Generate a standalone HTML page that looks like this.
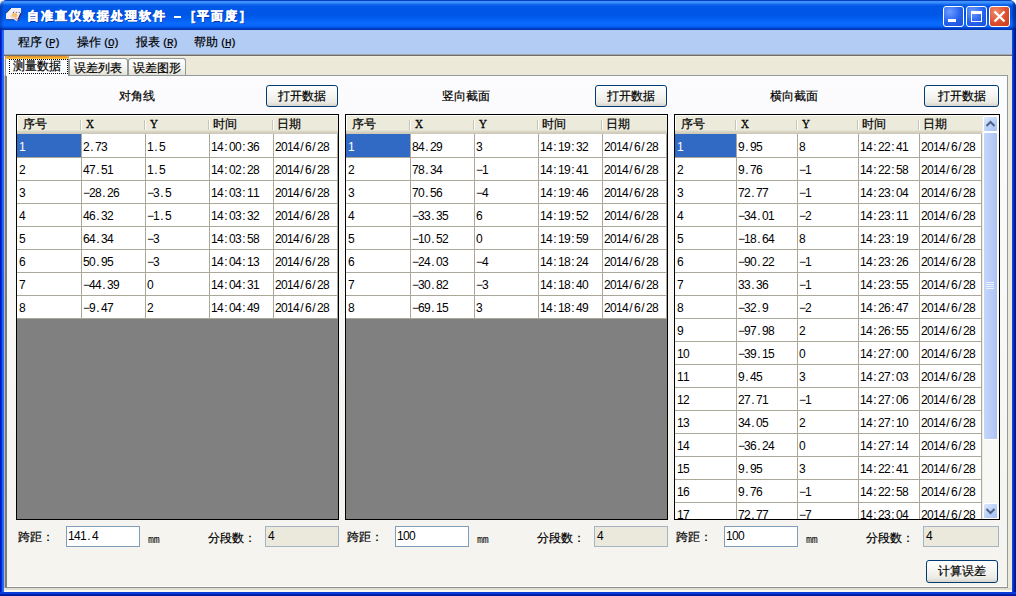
<!DOCTYPE html><html><head><meta charset="utf-8"><style>
*{margin:0;padding:0;box-sizing:border-box}
html,body{width:1016px;height:596px;overflow:hidden;background:#fff}
body{position:relative;font-family:'Liberation Sans', sans-serif;font-size:12px;color:#000}
.a{position:absolute}
.t{position:absolute;white-space:nowrap;line-height:12px;-webkit-text-stroke:0.2px currentColor}
.m{font-family:'Liberation Sans', sans-serif;font-size:12px;-webkit-text-stroke:0}
.m i{font-style:normal;display:inline-block;width:6px;text-align:center}
</style></head><body><div class="a" style="left:0px;top:0px;width:1016px;height:596px;background:#0050E4;border-radius:7px 7px 0 0"></div>
<div class="a" style="left:0px;top:0px;width:1016px;height:30px;border-radius:7px 7px 0 0;background:linear-gradient(#0840C0 0px,#0840C0 1px,#3D95FF 1px,#3A8EFA 3px,#1A6EF0 4px,#0058E8 6px,#0055E5 14px,#005CEE 18px,#0A6AFF 23px,#0866FA 26px,#0050E0 27.5px,#0038B8 29px,#0030A8 30px)"></div>
<div class="a" style="left:1008px;top:0px;width:8px;height:30px;border-radius:0 7px 0 0;background:linear-gradient(90deg,rgba(0,10,90,0) 0,rgba(0,10,90,0) 4px,rgba(0,10,90,0.35) 5px,rgba(0,10,90,0.55) 8px)"></div>
<div class="a" style="left:0px;top:0px;width:4px;height:30px;border-radius:7px 0 0 0;background:linear-gradient(90deg,rgba(0,10,90,0.35),rgba(0,10,90,0) 4px)"></div>
<div class="a" style="left:0px;top:30px;width:4px;height:566px;background:linear-gradient(90deg,#0014C0 0,#0014C0 1px,#0030DA 1px,#0030DA 2px,#1862FA 2px,#1862FA 3px,#2A6EEE 3px)"></div>
<div class="a" style="left:1012px;top:30px;width:4px;height:566px;background:linear-gradient(90deg,#1048E0 0,#1048E0 1px,#0030C8 1px,#0030C8 2px,#00209C 2px,#00209C 3px,#001888 3px)"></div>
<div class="a" style="left:0px;top:592px;width:1016px;height:4px;background:linear-gradient(#0A3CD8 0,#0A3CD8 2px,#0020B0 2px,#0020B0 3px,#0018A0 3px)"></div>
<div class="a" style="left:4px;top:30px;width:1008px;height:562px;background:#ECE9D8"></div>
<div class="a" style="left:4px;top:30px;width:1008px;height:24px;background:#B3CCF4"></div>
<div class="a" style="left:4px;top:54px;width:1008px;height:1px;background:#A0A6B0"></div>
<div class="a" style="left:4px;top:55px;width:1008px;height:1px;background:#716D64"></div>
<div class="a" style="left:4px;top:56px;width:1008px;height:1px;background:#F2EFE0"></div>
<div class="t" style="left:18px;top:36px;">程序<span style="font-family:'Liberation Mono', monospace;font-size:11px;letter-spacing:-1.6px;margin-left:2px">(<u>P</u>)</span></div>
<div class="t" style="left:77px;top:36px;">操作<span style="font-family:'Liberation Mono', monospace;font-size:11px;letter-spacing:-1.6px;margin-left:2px">(<u>O</u>)</span></div>
<div class="t" style="left:136px;top:36px;">报表<span style="font-family:'Liberation Mono', monospace;font-size:11px;letter-spacing:-1.6px;margin-left:2px">(<u>R</u>)</span></div>
<div class="t" style="left:194px;top:36px;">帮助<span style="font-family:'Liberation Mono', monospace;font-size:11px;letter-spacing:-1.6px;margin-left:2px">(<u>H</u>)</span></div>
<div class="t" style="left:27px;top:10px;color:#fff;font-weight:bold;font-size:12px;-webkit-text-stroke:0.5px #fff;text-shadow:1px 1px 0 #0A2A9A;letter-spacing:2px">自准直仪数据处理软件</div>
<div class="a" style="left:174px;top:16px;width:7px;height:2px;background:#fff"></div>
<div class="t" style="left:191px;top:10px;color:#fff;font-weight:bold;font-size:12px;-webkit-text-stroke:0.5px #fff;text-shadow:1px 1px 0 #0A2A9A;">[</div>
<div class="t" style="left:197px;top:10px;color:#fff;font-weight:bold;font-size:12px;-webkit-text-stroke:0.5px #fff;text-shadow:1px 1px 0 #0A2A9A;letter-spacing:2px">平面度</div>
<div class="t" style="left:240px;top:10px;color:#fff;font-weight:bold;font-size:12px;-webkit-text-stroke:0.5px #fff;text-shadow:1px 1px 0 #0A2A9A;">]</div>
<svg class="a" style="left:0px;top:0px" width="30" height="30" viewBox="0 0 30 30"><polygon points="11,8 21,8 21,13 17.5,21.5 14,19.5 6,19.5 6,13.3" fill="#F2EEF4"/><path d="M6,13.3 L11,8" stroke="#1C2C70" stroke-width="1"/><path d="M21,13 L17.5,21" stroke="#402848" stroke-width="1.2"/><path d="M6,19.6 L14,19.6" stroke="#203070" stroke-width="0.8"/><ellipse cx="14.5" cy="15.3" rx="2.8" ry="2" fill="#F7B23C"/><ellipse cx="14" cy="16.5" rx="4" ry="2" fill="#F8D0B0" opacity="0.5"/><circle cx="13.5" cy="12.4" r="0.55" fill="#505070"/><circle cx="16.3" cy="12.4" r="0.55" fill="#505070"/><circle cx="19.2" cy="12.4" r="0.55" fill="#505070"/><path d="M15,18 L18,20" stroke="#E0A0A8" stroke-width="1.5"/></svg>
<div class="a" style="left:943px;top:6px;width:21px;height:21px;border:1px solid #FFFFFF;border-radius:3px;background:radial-gradient(circle at 30% 25%,#6E9BFF,#2662EE 55%,#1A50D8)"></div>
<div class="a" style="left:966px;top:6px;width:21px;height:21px;border:1px solid #FFFFFF;border-radius:3px;background:radial-gradient(circle at 30% 25%,#6E9BFF,#2662EE 55%,#1A50D8)"></div>
<div class="a" style="left:989px;top:6px;width:21px;height:21px;border:1px solid #FFFFFF;border-radius:3px;background:radial-gradient(circle at 30% 25%,#F08A6A,#DC5030 55%,#C83C18)"></div>
<div class="a" style="left:948px;top:19px;width:8px;height:3px;background:#fff"></div>
<div class="a" style="left:971px;top:11px;width:11px;height:11px;border:1px solid #fff;border-top:3px solid #fff"></div>
<svg class="a" style="left:989px;top:6px" width="21" height="21"><path d="M5.5,5.5 L15.5,15.5 M15.5,5.5 L5.5,15.5" stroke="#fff" stroke-width="2.4"/></svg>
<div class="a" style="left:5px;top:75px;width:1003px;height:513px;border:1px solid #919B9C;border-bottom-color:#8E8E8A;border-left:2px solid #7E7C74;background:linear-gradient(#FCFCFE,#F4F3EE)"></div>
<div class="a" style="left:4px;top:75px;width:1px;height:513px;background:#B0B8D0"></div>
<div class="a" style="left:7px;top:586px;width:1000px;height:1px;background:#FFFFFF"></div>
<div class="a" style="left:5px;top:588px;width:1007px;height:2px;background:#E0DED2"></div>
<div class="a" style="left:5px;top:590px;width:1007px;height:2px;background:#FAFAF2"></div>
<div class="a" style="left:69px;top:58px;width:59px;height:17px;border:1px solid #919B9C;border-bottom:none;border-radius:3px 3px 0 0;background:linear-gradient(#FFFFFF,#F3F2EC 60%,#E4E2D8)"></div>
<div class="t" style="left:74px;top:62px;">误差列表</div>
<div class="a" style="left:128px;top:58px;width:58px;height:17px;border:1px solid #919B9C;border-bottom:none;border-radius:3px 3px 0 0;background:linear-gradient(#FFFFFF,#F3F2EC 60%,#E4E2D8)"></div>
<div class="t" style="left:133px;top:62px;">误差图形</div>
<div class="a" style="left:5px;top:56px;width:64px;height:20px;border:1px solid #919B9C;border-top:none;border-bottom:none;background:#FCFCFE"></div>
<div class="a" style="left:5px;top:56px;width:64px;height:3px;background:linear-gradient(#E08A2A,#FFC83C);border-radius:3px 3px 0 0"></div>
<div class="a" style="left:9px;top:59px;width:59px;height:15px;border:1px dotted #000"></div>
<div class="t" style="left:13px;top:60px;">测量数据</div>
<div class="t" style="left:119px;top:90px;">对角线</div>
<div class="a" style="left:266px;top:85px;width:72px;height:22px;border:1px solid #003C74;border-radius:3px;background:linear-gradient(#FFFFFF,#F4F4F0 50%,#ECEBE6 80%,#D8D4CC)"></div>
<div class="t" style="left:266px;top:90px;width:72px;text-align:center">打开数据</div>
<div class="a" style="left:16px;top:114px;width:323px;height:406px;border:1px solid #000;background:#808080"></div>
<div class="a" style="left:17px;top:115px;width:321px;height:19px;background:linear-gradient(#FFFFFF 0,#FFFFFF 1px,#EBEADB 1px,#EBEADB 15px,#DEDBCB 16px,#D6D2C2 17px,#CBC7B8 19px)"></div>
<div class="a" style="left:17px;top:115px;width:1px;height:15px;background:#FFFFFF"></div>
<div class="t" style="left:23px;top:118px;">序号</div>
<div class="a" style="left:80px;top:120px;width:1px;height:10px;background:#C7C5B2"></div>
<div class="a" style="left:81px;top:120px;width:1px;height:10px;background:#FFFFFF"></div>
<div class="t" style="left:86px;top:117px;font-family:'Liberation Serif', serif;font-size:11px;font-weight:normal;-webkit-text-stroke:0.3px #000;line-height:12px;transform:scaleY(1.1);transform-origin:0 0">X</div>
<div class="a" style="left:144px;top:120px;width:1px;height:10px;background:#C7C5B2"></div>
<div class="a" style="left:145px;top:120px;width:1px;height:10px;background:#FFFFFF"></div>
<div class="t" style="left:150px;top:117px;font-family:'Liberation Serif', serif;font-size:11px;font-weight:normal;-webkit-text-stroke:0.3px #000;line-height:12px;transform:scaleY(1.1);transform-origin:0 0">Y</div>
<div class="a" style="left:208px;top:120px;width:1px;height:10px;background:#C7C5B2"></div>
<div class="a" style="left:209px;top:120px;width:1px;height:10px;background:#FFFFFF"></div>
<div class="t" style="left:213px;top:118px;">时间</div>
<div class="a" style="left:272px;top:120px;width:1px;height:10px;background:#C7C5B2"></div>
<div class="a" style="left:273px;top:120px;width:1px;height:10px;background:#FFFFFF"></div>
<div class="t" style="left:277px;top:118px;">日期</div>
<div class="a" style="left:17px;top:134px;width:321px;height:385px;overflow:hidden">
<div class="a" style="left:0px;top:0px;width:65px;height:24px;background:#316AC5;border-right:1px solid #ACA899;border-bottom:1px solid #ACA899"></div>
<div class="t m" style="left:2px;top:7px;color:#FFFFFF"><i>1</i></div>
<div class="a" style="left:65px;top:0px;width:64px;height:24px;background:#FFFFFF;border-right:1px solid #ACA899;border-bottom:1px solid #ACA899"></div>
<div class="t m" style="left:66px;top:7px;color:#000"><i>2</i><i>.</i><i>7</i><i>3</i></div>
<div class="a" style="left:129px;top:0px;width:64px;height:24px;background:#FFFFFF;border-right:1px solid #ACA899;border-bottom:1px solid #ACA899"></div>
<div class="t m" style="left:130px;top:7px;color:#000"><i>1</i><i>.</i><i>5</i></div>
<div class="a" style="left:193px;top:0px;width:64px;height:24px;background:#FFFFFF;border-right:1px solid #ACA899;border-bottom:1px solid #ACA899"></div>
<div class="t m" style="left:194px;top:7px;color:#000"><i>1</i><i>4</i><i>:</i><i>0</i><i>0</i><i>:</i><i>3</i><i>6</i></div>
<div class="a" style="left:257px;top:0px;width:64px;height:24px;background:#FFFFFF;border-right:1px solid #ACA899;border-bottom:1px solid #ACA899"></div>
<div class="t m" style="left:258px;top:7px;color:#000"><i>2</i><i>0</i><i>1</i><i>4</i><i>/</i><i>6</i><i>/</i><i>2</i><i>8</i></div>
<div class="a" style="left:0px;top:24px;width:65px;height:23px;background:#FFFFFF;border-right:1px solid #ACA899;border-bottom:1px solid #ACA899"></div>
<div class="t m" style="left:2px;top:30px;color:#000"><i>2</i></div>
<div class="a" style="left:65px;top:24px;width:64px;height:23px;background:#FFFFFF;border-right:1px solid #ACA899;border-bottom:1px solid #ACA899"></div>
<div class="t m" style="left:66px;top:30px;color:#000"><i>4</i><i>7</i><i>.</i><i>5</i><i>1</i></div>
<div class="a" style="left:129px;top:24px;width:64px;height:23px;background:#FFFFFF;border-right:1px solid #ACA899;border-bottom:1px solid #ACA899"></div>
<div class="t m" style="left:130px;top:30px;color:#000"><i>1</i><i>.</i><i>5</i></div>
<div class="a" style="left:193px;top:24px;width:64px;height:23px;background:#FFFFFF;border-right:1px solid #ACA899;border-bottom:1px solid #ACA899"></div>
<div class="t m" style="left:194px;top:30px;color:#000"><i>1</i><i>4</i><i>:</i><i>0</i><i>2</i><i>:</i><i>2</i><i>8</i></div>
<div class="a" style="left:257px;top:24px;width:64px;height:23px;background:#FFFFFF;border-right:1px solid #ACA899;border-bottom:1px solid #ACA899"></div>
<div class="t m" style="left:258px;top:30px;color:#000"><i>2</i><i>0</i><i>1</i><i>4</i><i>/</i><i>6</i><i>/</i><i>2</i><i>8</i></div>
<div class="a" style="left:0px;top:47px;width:65px;height:23px;background:#FFFFFF;border-right:1px solid #ACA899;border-bottom:1px solid #ACA899"></div>
<div class="t m" style="left:2px;top:53px;color:#000"><i>3</i></div>
<div class="a" style="left:65px;top:47px;width:64px;height:23px;background:#FFFFFF;border-right:1px solid #ACA899;border-bottom:1px solid #ACA899"></div>
<div class="t m" style="left:66px;top:53px;color:#000"><i>−</i><i>2</i><i>8</i><i>.</i><i>2</i><i>6</i></div>
<div class="a" style="left:129px;top:47px;width:64px;height:23px;background:#FFFFFF;border-right:1px solid #ACA899;border-bottom:1px solid #ACA899"></div>
<div class="t m" style="left:130px;top:53px;color:#000"><i>−</i><i>3</i><i>.</i><i>5</i></div>
<div class="a" style="left:193px;top:47px;width:64px;height:23px;background:#FFFFFF;border-right:1px solid #ACA899;border-bottom:1px solid #ACA899"></div>
<div class="t m" style="left:194px;top:53px;color:#000"><i>1</i><i>4</i><i>:</i><i>0</i><i>3</i><i>:</i><i>1</i><i>1</i></div>
<div class="a" style="left:257px;top:47px;width:64px;height:23px;background:#FFFFFF;border-right:1px solid #ACA899;border-bottom:1px solid #ACA899"></div>
<div class="t m" style="left:258px;top:53px;color:#000"><i>2</i><i>0</i><i>1</i><i>4</i><i>/</i><i>6</i><i>/</i><i>2</i><i>8</i></div>
<div class="a" style="left:0px;top:70px;width:65px;height:23px;background:#FFFFFF;border-right:1px solid #ACA899;border-bottom:1px solid #ACA899"></div>
<div class="t m" style="left:2px;top:76px;color:#000"><i>4</i></div>
<div class="a" style="left:65px;top:70px;width:64px;height:23px;background:#FFFFFF;border-right:1px solid #ACA899;border-bottom:1px solid #ACA899"></div>
<div class="t m" style="left:66px;top:76px;color:#000"><i>4</i><i>6</i><i>.</i><i>3</i><i>2</i></div>
<div class="a" style="left:129px;top:70px;width:64px;height:23px;background:#FFFFFF;border-right:1px solid #ACA899;border-bottom:1px solid #ACA899"></div>
<div class="t m" style="left:130px;top:76px;color:#000"><i>−</i><i>1</i><i>.</i><i>5</i></div>
<div class="a" style="left:193px;top:70px;width:64px;height:23px;background:#FFFFFF;border-right:1px solid #ACA899;border-bottom:1px solid #ACA899"></div>
<div class="t m" style="left:194px;top:76px;color:#000"><i>1</i><i>4</i><i>:</i><i>0</i><i>3</i><i>:</i><i>3</i><i>2</i></div>
<div class="a" style="left:257px;top:70px;width:64px;height:23px;background:#FFFFFF;border-right:1px solid #ACA899;border-bottom:1px solid #ACA899"></div>
<div class="t m" style="left:258px;top:76px;color:#000"><i>2</i><i>0</i><i>1</i><i>4</i><i>/</i><i>6</i><i>/</i><i>2</i><i>8</i></div>
<div class="a" style="left:0px;top:93px;width:65px;height:23px;background:#FFFFFF;border-right:1px solid #ACA899;border-bottom:1px solid #ACA899"></div>
<div class="t m" style="left:2px;top:99px;color:#000"><i>5</i></div>
<div class="a" style="left:65px;top:93px;width:64px;height:23px;background:#FFFFFF;border-right:1px solid #ACA899;border-bottom:1px solid #ACA899"></div>
<div class="t m" style="left:66px;top:99px;color:#000"><i>6</i><i>4</i><i>.</i><i>3</i><i>4</i></div>
<div class="a" style="left:129px;top:93px;width:64px;height:23px;background:#FFFFFF;border-right:1px solid #ACA899;border-bottom:1px solid #ACA899"></div>
<div class="t m" style="left:130px;top:99px;color:#000"><i>−</i><i>3</i></div>
<div class="a" style="left:193px;top:93px;width:64px;height:23px;background:#FFFFFF;border-right:1px solid #ACA899;border-bottom:1px solid #ACA899"></div>
<div class="t m" style="left:194px;top:99px;color:#000"><i>1</i><i>4</i><i>:</i><i>0</i><i>3</i><i>:</i><i>5</i><i>8</i></div>
<div class="a" style="left:257px;top:93px;width:64px;height:23px;background:#FFFFFF;border-right:1px solid #ACA899;border-bottom:1px solid #ACA899"></div>
<div class="t m" style="left:258px;top:99px;color:#000"><i>2</i><i>0</i><i>1</i><i>4</i><i>/</i><i>6</i><i>/</i><i>2</i><i>8</i></div>
<div class="a" style="left:0px;top:116px;width:65px;height:23px;background:#FFFFFF;border-right:1px solid #ACA899;border-bottom:1px solid #ACA899"></div>
<div class="t m" style="left:2px;top:122px;color:#000"><i>6</i></div>
<div class="a" style="left:65px;top:116px;width:64px;height:23px;background:#FFFFFF;border-right:1px solid #ACA899;border-bottom:1px solid #ACA899"></div>
<div class="t m" style="left:66px;top:122px;color:#000"><i>5</i><i>0</i><i>.</i><i>9</i><i>5</i></div>
<div class="a" style="left:129px;top:116px;width:64px;height:23px;background:#FFFFFF;border-right:1px solid #ACA899;border-bottom:1px solid #ACA899"></div>
<div class="t m" style="left:130px;top:122px;color:#000"><i>−</i><i>3</i></div>
<div class="a" style="left:193px;top:116px;width:64px;height:23px;background:#FFFFFF;border-right:1px solid #ACA899;border-bottom:1px solid #ACA899"></div>
<div class="t m" style="left:194px;top:122px;color:#000"><i>1</i><i>4</i><i>:</i><i>0</i><i>4</i><i>:</i><i>1</i><i>3</i></div>
<div class="a" style="left:257px;top:116px;width:64px;height:23px;background:#FFFFFF;border-right:1px solid #ACA899;border-bottom:1px solid #ACA899"></div>
<div class="t m" style="left:258px;top:122px;color:#000"><i>2</i><i>0</i><i>1</i><i>4</i><i>/</i><i>6</i><i>/</i><i>2</i><i>8</i></div>
<div class="a" style="left:0px;top:139px;width:65px;height:23px;background:#FFFFFF;border-right:1px solid #ACA899;border-bottom:1px solid #ACA899"></div>
<div class="t m" style="left:2px;top:145px;color:#000"><i>7</i></div>
<div class="a" style="left:65px;top:139px;width:64px;height:23px;background:#FFFFFF;border-right:1px solid #ACA899;border-bottom:1px solid #ACA899"></div>
<div class="t m" style="left:66px;top:145px;color:#000"><i>−</i><i>4</i><i>4</i><i>.</i><i>3</i><i>9</i></div>
<div class="a" style="left:129px;top:139px;width:64px;height:23px;background:#FFFFFF;border-right:1px solid #ACA899;border-bottom:1px solid #ACA899"></div>
<div class="t m" style="left:130px;top:145px;color:#000"><i>0</i></div>
<div class="a" style="left:193px;top:139px;width:64px;height:23px;background:#FFFFFF;border-right:1px solid #ACA899;border-bottom:1px solid #ACA899"></div>
<div class="t m" style="left:194px;top:145px;color:#000"><i>1</i><i>4</i><i>:</i><i>0</i><i>4</i><i>:</i><i>3</i><i>1</i></div>
<div class="a" style="left:257px;top:139px;width:64px;height:23px;background:#FFFFFF;border-right:1px solid #ACA899;border-bottom:1px solid #ACA899"></div>
<div class="t m" style="left:258px;top:145px;color:#000"><i>2</i><i>0</i><i>1</i><i>4</i><i>/</i><i>6</i><i>/</i><i>2</i><i>8</i></div>
<div class="a" style="left:0px;top:162px;width:65px;height:23px;background:#FFFFFF;border-right:1px solid #ACA899;border-bottom:1px solid #ACA899"></div>
<div class="t m" style="left:2px;top:168px;color:#000"><i>8</i></div>
<div class="a" style="left:65px;top:162px;width:64px;height:23px;background:#FFFFFF;border-right:1px solid #ACA899;border-bottom:1px solid #ACA899"></div>
<div class="t m" style="left:66px;top:168px;color:#000"><i>−</i><i>9</i><i>.</i><i>4</i><i>7</i></div>
<div class="a" style="left:129px;top:162px;width:64px;height:23px;background:#FFFFFF;border-right:1px solid #ACA899;border-bottom:1px solid #ACA899"></div>
<div class="t m" style="left:130px;top:168px;color:#000"><i>2</i></div>
<div class="a" style="left:193px;top:162px;width:64px;height:23px;background:#FFFFFF;border-right:1px solid #ACA899;border-bottom:1px solid #ACA899"></div>
<div class="t m" style="left:194px;top:168px;color:#000"><i>1</i><i>4</i><i>:</i><i>0</i><i>4</i><i>:</i><i>4</i><i>9</i></div>
<div class="a" style="left:257px;top:162px;width:64px;height:23px;background:#FFFFFF;border-right:1px solid #ACA899;border-bottom:1px solid #ACA899"></div>
<div class="t m" style="left:258px;top:168px;color:#000"><i>2</i><i>0</i><i>1</i><i>4</i><i>/</i><i>6</i><i>/</i><i>2</i><i>8</i></div>
</div>
<div class="t" style="left:18px;top:531px;">跨距：</div>
<div class="a" style="left:66px;top:526px;width:74px;height:21px;border:1px solid #7F9DB9;background:#fff"></div>
<div class="t m" style="left:68px;top:530px;"><i>1</i><i>4</i><i>1</i><i>.</i><i>4</i></div>
<div class="t" style="left:148px;top:535px;font-family:'Liberation Mono', monospace;font-size:10px;letter-spacing:-0.3px;-webkit-text-stroke:0">mm</div>
<div class="t" style="left:208px;top:532px;">分段数：</div>
<div class="a" style="left:265px;top:526px;width:74px;height:21px;border:1px solid #A5B4C4;background:#EBE9DC"></div>
<div class="t m" style="left:268px;top:530px;"><i>4</i></div>
<div class="t" style="left:442px;top:90px;">竖向截面</div>
<div class="a" style="left:595px;top:85px;width:72px;height:22px;border:1px solid #003C74;border-radius:3px;background:linear-gradient(#FFFFFF,#F4F4F0 50%,#ECEBE6 80%,#D8D4CC)"></div>
<div class="t" style="left:595px;top:90px;width:72px;text-align:center">打开数据</div>
<div class="a" style="left:345px;top:114px;width:323px;height:406px;border:1px solid #000;background:#808080"></div>
<div class="a" style="left:346px;top:115px;width:321px;height:19px;background:linear-gradient(#FFFFFF 0,#FFFFFF 1px,#EBEADB 1px,#EBEADB 15px,#DEDBCB 16px,#D6D2C2 17px,#CBC7B8 19px)"></div>
<div class="a" style="left:346px;top:115px;width:1px;height:15px;background:#FFFFFF"></div>
<div class="t" style="left:352px;top:118px;">序号</div>
<div class="a" style="left:409px;top:120px;width:1px;height:10px;background:#C7C5B2"></div>
<div class="a" style="left:410px;top:120px;width:1px;height:10px;background:#FFFFFF"></div>
<div class="t" style="left:415px;top:117px;font-family:'Liberation Serif', serif;font-size:11px;font-weight:normal;-webkit-text-stroke:0.3px #000;line-height:12px;transform:scaleY(1.1);transform-origin:0 0">X</div>
<div class="a" style="left:473px;top:120px;width:1px;height:10px;background:#C7C5B2"></div>
<div class="a" style="left:474px;top:120px;width:1px;height:10px;background:#FFFFFF"></div>
<div class="t" style="left:479px;top:117px;font-family:'Liberation Serif', serif;font-size:11px;font-weight:normal;-webkit-text-stroke:0.3px #000;line-height:12px;transform:scaleY(1.1);transform-origin:0 0">Y</div>
<div class="a" style="left:537px;top:120px;width:1px;height:10px;background:#C7C5B2"></div>
<div class="a" style="left:538px;top:120px;width:1px;height:10px;background:#FFFFFF"></div>
<div class="t" style="left:542px;top:118px;">时间</div>
<div class="a" style="left:601px;top:120px;width:1px;height:10px;background:#C7C5B2"></div>
<div class="a" style="left:602px;top:120px;width:1px;height:10px;background:#FFFFFF"></div>
<div class="t" style="left:606px;top:118px;">日期</div>
<div class="a" style="left:346px;top:134px;width:321px;height:385px;overflow:hidden">
<div class="a" style="left:0px;top:0px;width:65px;height:24px;background:#316AC5;border-right:1px solid #ACA899;border-bottom:1px solid #ACA899"></div>
<div class="t m" style="left:2px;top:7px;color:#FFFFFF"><i>1</i></div>
<div class="a" style="left:65px;top:0px;width:64px;height:24px;background:#FFFFFF;border-right:1px solid #ACA899;border-bottom:1px solid #ACA899"></div>
<div class="t m" style="left:66px;top:7px;color:#000"><i>8</i><i>4</i><i>.</i><i>2</i><i>9</i></div>
<div class="a" style="left:129px;top:0px;width:64px;height:24px;background:#FFFFFF;border-right:1px solid #ACA899;border-bottom:1px solid #ACA899"></div>
<div class="t m" style="left:130px;top:7px;color:#000"><i>3</i></div>
<div class="a" style="left:193px;top:0px;width:64px;height:24px;background:#FFFFFF;border-right:1px solid #ACA899;border-bottom:1px solid #ACA899"></div>
<div class="t m" style="left:194px;top:7px;color:#000"><i>1</i><i>4</i><i>:</i><i>1</i><i>9</i><i>:</i><i>3</i><i>2</i></div>
<div class="a" style="left:257px;top:0px;width:64px;height:24px;background:#FFFFFF;border-right:1px solid #ACA899;border-bottom:1px solid #ACA899"></div>
<div class="t m" style="left:258px;top:7px;color:#000"><i>2</i><i>0</i><i>1</i><i>4</i><i>/</i><i>6</i><i>/</i><i>2</i><i>8</i></div>
<div class="a" style="left:0px;top:24px;width:65px;height:23px;background:#FFFFFF;border-right:1px solid #ACA899;border-bottom:1px solid #ACA899"></div>
<div class="t m" style="left:2px;top:30px;color:#000"><i>2</i></div>
<div class="a" style="left:65px;top:24px;width:64px;height:23px;background:#FFFFFF;border-right:1px solid #ACA899;border-bottom:1px solid #ACA899"></div>
<div class="t m" style="left:66px;top:30px;color:#000"><i>7</i><i>8</i><i>.</i><i>3</i><i>4</i></div>
<div class="a" style="left:129px;top:24px;width:64px;height:23px;background:#FFFFFF;border-right:1px solid #ACA899;border-bottom:1px solid #ACA899"></div>
<div class="t m" style="left:130px;top:30px;color:#000"><i>−</i><i>1</i></div>
<div class="a" style="left:193px;top:24px;width:64px;height:23px;background:#FFFFFF;border-right:1px solid #ACA899;border-bottom:1px solid #ACA899"></div>
<div class="t m" style="left:194px;top:30px;color:#000"><i>1</i><i>4</i><i>:</i><i>1</i><i>9</i><i>:</i><i>4</i><i>1</i></div>
<div class="a" style="left:257px;top:24px;width:64px;height:23px;background:#FFFFFF;border-right:1px solid #ACA899;border-bottom:1px solid #ACA899"></div>
<div class="t m" style="left:258px;top:30px;color:#000"><i>2</i><i>0</i><i>1</i><i>4</i><i>/</i><i>6</i><i>/</i><i>2</i><i>8</i></div>
<div class="a" style="left:0px;top:47px;width:65px;height:23px;background:#FFFFFF;border-right:1px solid #ACA899;border-bottom:1px solid #ACA899"></div>
<div class="t m" style="left:2px;top:53px;color:#000"><i>3</i></div>
<div class="a" style="left:65px;top:47px;width:64px;height:23px;background:#FFFFFF;border-right:1px solid #ACA899;border-bottom:1px solid #ACA899"></div>
<div class="t m" style="left:66px;top:53px;color:#000"><i>7</i><i>0</i><i>.</i><i>5</i><i>6</i></div>
<div class="a" style="left:129px;top:47px;width:64px;height:23px;background:#FFFFFF;border-right:1px solid #ACA899;border-bottom:1px solid #ACA899"></div>
<div class="t m" style="left:130px;top:53px;color:#000"><i>−</i><i>4</i></div>
<div class="a" style="left:193px;top:47px;width:64px;height:23px;background:#FFFFFF;border-right:1px solid #ACA899;border-bottom:1px solid #ACA899"></div>
<div class="t m" style="left:194px;top:53px;color:#000"><i>1</i><i>4</i><i>:</i><i>1</i><i>9</i><i>:</i><i>4</i><i>6</i></div>
<div class="a" style="left:257px;top:47px;width:64px;height:23px;background:#FFFFFF;border-right:1px solid #ACA899;border-bottom:1px solid #ACA899"></div>
<div class="t m" style="left:258px;top:53px;color:#000"><i>2</i><i>0</i><i>1</i><i>4</i><i>/</i><i>6</i><i>/</i><i>2</i><i>8</i></div>
<div class="a" style="left:0px;top:70px;width:65px;height:23px;background:#FFFFFF;border-right:1px solid #ACA899;border-bottom:1px solid #ACA899"></div>
<div class="t m" style="left:2px;top:76px;color:#000"><i>4</i></div>
<div class="a" style="left:65px;top:70px;width:64px;height:23px;background:#FFFFFF;border-right:1px solid #ACA899;border-bottom:1px solid #ACA899"></div>
<div class="t m" style="left:66px;top:76px;color:#000"><i>−</i><i>3</i><i>3</i><i>.</i><i>3</i><i>5</i></div>
<div class="a" style="left:129px;top:70px;width:64px;height:23px;background:#FFFFFF;border-right:1px solid #ACA899;border-bottom:1px solid #ACA899"></div>
<div class="t m" style="left:130px;top:76px;color:#000"><i>6</i></div>
<div class="a" style="left:193px;top:70px;width:64px;height:23px;background:#FFFFFF;border-right:1px solid #ACA899;border-bottom:1px solid #ACA899"></div>
<div class="t m" style="left:194px;top:76px;color:#000"><i>1</i><i>4</i><i>:</i><i>1</i><i>9</i><i>:</i><i>5</i><i>2</i></div>
<div class="a" style="left:257px;top:70px;width:64px;height:23px;background:#FFFFFF;border-right:1px solid #ACA899;border-bottom:1px solid #ACA899"></div>
<div class="t m" style="left:258px;top:76px;color:#000"><i>2</i><i>0</i><i>1</i><i>4</i><i>/</i><i>6</i><i>/</i><i>2</i><i>8</i></div>
<div class="a" style="left:0px;top:93px;width:65px;height:23px;background:#FFFFFF;border-right:1px solid #ACA899;border-bottom:1px solid #ACA899"></div>
<div class="t m" style="left:2px;top:99px;color:#000"><i>5</i></div>
<div class="a" style="left:65px;top:93px;width:64px;height:23px;background:#FFFFFF;border-right:1px solid #ACA899;border-bottom:1px solid #ACA899"></div>
<div class="t m" style="left:66px;top:99px;color:#000"><i>−</i><i>1</i><i>0</i><i>.</i><i>5</i><i>2</i></div>
<div class="a" style="left:129px;top:93px;width:64px;height:23px;background:#FFFFFF;border-right:1px solid #ACA899;border-bottom:1px solid #ACA899"></div>
<div class="t m" style="left:130px;top:99px;color:#000"><i>0</i></div>
<div class="a" style="left:193px;top:93px;width:64px;height:23px;background:#FFFFFF;border-right:1px solid #ACA899;border-bottom:1px solid #ACA899"></div>
<div class="t m" style="left:194px;top:99px;color:#000"><i>1</i><i>4</i><i>:</i><i>1</i><i>9</i><i>:</i><i>5</i><i>9</i></div>
<div class="a" style="left:257px;top:93px;width:64px;height:23px;background:#FFFFFF;border-right:1px solid #ACA899;border-bottom:1px solid #ACA899"></div>
<div class="t m" style="left:258px;top:99px;color:#000"><i>2</i><i>0</i><i>1</i><i>4</i><i>/</i><i>6</i><i>/</i><i>2</i><i>8</i></div>
<div class="a" style="left:0px;top:116px;width:65px;height:23px;background:#FFFFFF;border-right:1px solid #ACA899;border-bottom:1px solid #ACA899"></div>
<div class="t m" style="left:2px;top:122px;color:#000"><i>6</i></div>
<div class="a" style="left:65px;top:116px;width:64px;height:23px;background:#FFFFFF;border-right:1px solid #ACA899;border-bottom:1px solid #ACA899"></div>
<div class="t m" style="left:66px;top:122px;color:#000"><i>−</i><i>2</i><i>4</i><i>.</i><i>0</i><i>3</i></div>
<div class="a" style="left:129px;top:116px;width:64px;height:23px;background:#FFFFFF;border-right:1px solid #ACA899;border-bottom:1px solid #ACA899"></div>
<div class="t m" style="left:130px;top:122px;color:#000"><i>−</i><i>4</i></div>
<div class="a" style="left:193px;top:116px;width:64px;height:23px;background:#FFFFFF;border-right:1px solid #ACA899;border-bottom:1px solid #ACA899"></div>
<div class="t m" style="left:194px;top:122px;color:#000"><i>1</i><i>4</i><i>:</i><i>1</i><i>8</i><i>:</i><i>2</i><i>4</i></div>
<div class="a" style="left:257px;top:116px;width:64px;height:23px;background:#FFFFFF;border-right:1px solid #ACA899;border-bottom:1px solid #ACA899"></div>
<div class="t m" style="left:258px;top:122px;color:#000"><i>2</i><i>0</i><i>1</i><i>4</i><i>/</i><i>6</i><i>/</i><i>2</i><i>8</i></div>
<div class="a" style="left:0px;top:139px;width:65px;height:23px;background:#FFFFFF;border-right:1px solid #ACA899;border-bottom:1px solid #ACA899"></div>
<div class="t m" style="left:2px;top:145px;color:#000"><i>7</i></div>
<div class="a" style="left:65px;top:139px;width:64px;height:23px;background:#FFFFFF;border-right:1px solid #ACA899;border-bottom:1px solid #ACA899"></div>
<div class="t m" style="left:66px;top:145px;color:#000"><i>−</i><i>3</i><i>0</i><i>.</i><i>8</i><i>2</i></div>
<div class="a" style="left:129px;top:139px;width:64px;height:23px;background:#FFFFFF;border-right:1px solid #ACA899;border-bottom:1px solid #ACA899"></div>
<div class="t m" style="left:130px;top:145px;color:#000"><i>−</i><i>3</i></div>
<div class="a" style="left:193px;top:139px;width:64px;height:23px;background:#FFFFFF;border-right:1px solid #ACA899;border-bottom:1px solid #ACA899"></div>
<div class="t m" style="left:194px;top:145px;color:#000"><i>1</i><i>4</i><i>:</i><i>1</i><i>8</i><i>:</i><i>4</i><i>0</i></div>
<div class="a" style="left:257px;top:139px;width:64px;height:23px;background:#FFFFFF;border-right:1px solid #ACA899;border-bottom:1px solid #ACA899"></div>
<div class="t m" style="left:258px;top:145px;color:#000"><i>2</i><i>0</i><i>1</i><i>4</i><i>/</i><i>6</i><i>/</i><i>2</i><i>8</i></div>
<div class="a" style="left:0px;top:162px;width:65px;height:23px;background:#FFFFFF;border-right:1px solid #ACA899;border-bottom:1px solid #ACA899"></div>
<div class="t m" style="left:2px;top:168px;color:#000"><i>8</i></div>
<div class="a" style="left:65px;top:162px;width:64px;height:23px;background:#FFFFFF;border-right:1px solid #ACA899;border-bottom:1px solid #ACA899"></div>
<div class="t m" style="left:66px;top:168px;color:#000"><i>−</i><i>6</i><i>9</i><i>.</i><i>1</i><i>5</i></div>
<div class="a" style="left:129px;top:162px;width:64px;height:23px;background:#FFFFFF;border-right:1px solid #ACA899;border-bottom:1px solid #ACA899"></div>
<div class="t m" style="left:130px;top:168px;color:#000"><i>3</i></div>
<div class="a" style="left:193px;top:162px;width:64px;height:23px;background:#FFFFFF;border-right:1px solid #ACA899;border-bottom:1px solid #ACA899"></div>
<div class="t m" style="left:194px;top:168px;color:#000"><i>1</i><i>4</i><i>:</i><i>1</i><i>8</i><i>:</i><i>4</i><i>9</i></div>
<div class="a" style="left:257px;top:162px;width:64px;height:23px;background:#FFFFFF;border-right:1px solid #ACA899;border-bottom:1px solid #ACA899"></div>
<div class="t m" style="left:258px;top:168px;color:#000"><i>2</i><i>0</i><i>1</i><i>4</i><i>/</i><i>6</i><i>/</i><i>2</i><i>8</i></div>
</div>
<div class="t" style="left:347px;top:531px;">跨距：</div>
<div class="a" style="left:395px;top:526px;width:74px;height:21px;border:1px solid #7F9DB9;background:#fff"></div>
<div class="t m" style="left:397px;top:530px;"><i>1</i><i>0</i><i>0</i></div>
<div class="t" style="left:477px;top:535px;font-family:'Liberation Mono', monospace;font-size:10px;letter-spacing:-0.3px;-webkit-text-stroke:0">mm</div>
<div class="t" style="left:537px;top:532px;">分段数：</div>
<div class="a" style="left:594px;top:526px;width:74px;height:21px;border:1px solid #A5B4C4;background:#EBE9DC"></div>
<div class="t m" style="left:597px;top:530px;"><i>4</i></div>
<div class="t" style="left:770px;top:90px;">横向截面</div>
<div class="a" style="left:924px;top:85px;width:75px;height:22px;border:1px solid #003C74;border-radius:3px;background:linear-gradient(#FFFFFF,#F4F4F0 50%,#ECEBE6 80%,#D8D4CC)"></div>
<div class="t" style="left:924px;top:90px;width:75px;text-align:center">打开数据</div>
<div class="a" style="left:674px;top:114px;width:326px;height:406px;border:1px solid #000;background:#808080"></div>
<div class="a" style="left:675px;top:115px;width:307px;height:19px;background:linear-gradient(#FFFFFF 0,#FFFFFF 1px,#EBEADB 1px,#EBEADB 15px,#DEDBCB 16px,#D6D2C2 17px,#CBC7B8 19px)"></div>
<div class="a" style="left:675px;top:115px;width:1px;height:15px;background:#FFFFFF"></div>
<div class="t" style="left:681px;top:118px;">序号</div>
<div class="a" style="left:735px;top:120px;width:1px;height:10px;background:#C7C5B2"></div>
<div class="a" style="left:736px;top:120px;width:1px;height:10px;background:#FFFFFF"></div>
<div class="t" style="left:741px;top:117px;font-family:'Liberation Serif', serif;font-size:11px;font-weight:normal;-webkit-text-stroke:0.3px #000;line-height:12px;transform:scaleY(1.1);transform-origin:0 0">X</div>
<div class="a" style="left:796px;top:120px;width:1px;height:10px;background:#C7C5B2"></div>
<div class="a" style="left:797px;top:120px;width:1px;height:10px;background:#FFFFFF"></div>
<div class="t" style="left:802px;top:117px;font-family:'Liberation Serif', serif;font-size:11px;font-weight:normal;-webkit-text-stroke:0.3px #000;line-height:12px;transform:scaleY(1.1);transform-origin:0 0">Y</div>
<div class="a" style="left:857px;top:120px;width:1px;height:10px;background:#C7C5B2"></div>
<div class="a" style="left:858px;top:120px;width:1px;height:10px;background:#FFFFFF"></div>
<div class="t" style="left:862px;top:118px;">时间</div>
<div class="a" style="left:918px;top:120px;width:1px;height:10px;background:#C7C5B2"></div>
<div class="a" style="left:919px;top:120px;width:1px;height:10px;background:#FFFFFF"></div>
<div class="t" style="left:923px;top:118px;">日期</div>
<div class="a" style="left:675px;top:134px;width:324px;height:385px;overflow:hidden">
<div class="a" style="left:0px;top:0px;width:62px;height:24px;background:#316AC5;border-right:1px solid #ACA899;border-bottom:1px solid #ACA899"></div>
<div class="t m" style="left:2px;top:7px;color:#FFFFFF"><i>1</i></div>
<div class="a" style="left:62px;top:0px;width:61px;height:24px;background:#FFFFFF;border-right:1px solid #ACA899;border-bottom:1px solid #ACA899"></div>
<div class="t m" style="left:63px;top:7px;color:#000"><i>9</i><i>.</i><i>9</i><i>5</i></div>
<div class="a" style="left:123px;top:0px;width:61px;height:24px;background:#FFFFFF;border-right:1px solid #ACA899;border-bottom:1px solid #ACA899"></div>
<div class="t m" style="left:124px;top:7px;color:#000"><i>8</i></div>
<div class="a" style="left:184px;top:0px;width:61px;height:24px;background:#FFFFFF;border-right:1px solid #ACA899;border-bottom:1px solid #ACA899"></div>
<div class="t m" style="left:185px;top:7px;color:#000"><i>1</i><i>4</i><i>:</i><i>2</i><i>2</i><i>:</i><i>4</i><i>1</i></div>
<div class="a" style="left:245px;top:0px;width:62px;height:24px;background:#FFFFFF;border-right:1px solid #ACA899;border-bottom:1px solid #ACA899"></div>
<div class="t m" style="left:246px;top:7px;color:#000"><i>2</i><i>0</i><i>1</i><i>4</i><i>/</i><i>6</i><i>/</i><i>2</i><i>8</i></div>
<div class="a" style="left:0px;top:24px;width:62px;height:23px;background:#FFFFFF;border-right:1px solid #ACA899;border-bottom:1px solid #ACA899"></div>
<div class="t m" style="left:2px;top:30px;color:#000"><i>2</i></div>
<div class="a" style="left:62px;top:24px;width:61px;height:23px;background:#FFFFFF;border-right:1px solid #ACA899;border-bottom:1px solid #ACA899"></div>
<div class="t m" style="left:63px;top:30px;color:#000"><i>9</i><i>.</i><i>7</i><i>6</i></div>
<div class="a" style="left:123px;top:24px;width:61px;height:23px;background:#FFFFFF;border-right:1px solid #ACA899;border-bottom:1px solid #ACA899"></div>
<div class="t m" style="left:124px;top:30px;color:#000"><i>−</i><i>1</i></div>
<div class="a" style="left:184px;top:24px;width:61px;height:23px;background:#FFFFFF;border-right:1px solid #ACA899;border-bottom:1px solid #ACA899"></div>
<div class="t m" style="left:185px;top:30px;color:#000"><i>1</i><i>4</i><i>:</i><i>2</i><i>2</i><i>:</i><i>5</i><i>8</i></div>
<div class="a" style="left:245px;top:24px;width:62px;height:23px;background:#FFFFFF;border-right:1px solid #ACA899;border-bottom:1px solid #ACA899"></div>
<div class="t m" style="left:246px;top:30px;color:#000"><i>2</i><i>0</i><i>1</i><i>4</i><i>/</i><i>6</i><i>/</i><i>2</i><i>8</i></div>
<div class="a" style="left:0px;top:47px;width:62px;height:23px;background:#FFFFFF;border-right:1px solid #ACA899;border-bottom:1px solid #ACA899"></div>
<div class="t m" style="left:2px;top:53px;color:#000"><i>3</i></div>
<div class="a" style="left:62px;top:47px;width:61px;height:23px;background:#FFFFFF;border-right:1px solid #ACA899;border-bottom:1px solid #ACA899"></div>
<div class="t m" style="left:63px;top:53px;color:#000"><i>7</i><i>2</i><i>.</i><i>7</i><i>7</i></div>
<div class="a" style="left:123px;top:47px;width:61px;height:23px;background:#FFFFFF;border-right:1px solid #ACA899;border-bottom:1px solid #ACA899"></div>
<div class="t m" style="left:124px;top:53px;color:#000"><i>−</i><i>1</i></div>
<div class="a" style="left:184px;top:47px;width:61px;height:23px;background:#FFFFFF;border-right:1px solid #ACA899;border-bottom:1px solid #ACA899"></div>
<div class="t m" style="left:185px;top:53px;color:#000"><i>1</i><i>4</i><i>:</i><i>2</i><i>3</i><i>:</i><i>0</i><i>4</i></div>
<div class="a" style="left:245px;top:47px;width:62px;height:23px;background:#FFFFFF;border-right:1px solid #ACA899;border-bottom:1px solid #ACA899"></div>
<div class="t m" style="left:246px;top:53px;color:#000"><i>2</i><i>0</i><i>1</i><i>4</i><i>/</i><i>6</i><i>/</i><i>2</i><i>8</i></div>
<div class="a" style="left:0px;top:70px;width:62px;height:23px;background:#FFFFFF;border-right:1px solid #ACA899;border-bottom:1px solid #ACA899"></div>
<div class="t m" style="left:2px;top:76px;color:#000"><i>4</i></div>
<div class="a" style="left:62px;top:70px;width:61px;height:23px;background:#FFFFFF;border-right:1px solid #ACA899;border-bottom:1px solid #ACA899"></div>
<div class="t m" style="left:63px;top:76px;color:#000"><i>−</i><i>3</i><i>4</i><i>.</i><i>0</i><i>1</i></div>
<div class="a" style="left:123px;top:70px;width:61px;height:23px;background:#FFFFFF;border-right:1px solid #ACA899;border-bottom:1px solid #ACA899"></div>
<div class="t m" style="left:124px;top:76px;color:#000"><i>−</i><i>2</i></div>
<div class="a" style="left:184px;top:70px;width:61px;height:23px;background:#FFFFFF;border-right:1px solid #ACA899;border-bottom:1px solid #ACA899"></div>
<div class="t m" style="left:185px;top:76px;color:#000"><i>1</i><i>4</i><i>:</i><i>2</i><i>3</i><i>:</i><i>1</i><i>1</i></div>
<div class="a" style="left:245px;top:70px;width:62px;height:23px;background:#FFFFFF;border-right:1px solid #ACA899;border-bottom:1px solid #ACA899"></div>
<div class="t m" style="left:246px;top:76px;color:#000"><i>2</i><i>0</i><i>1</i><i>4</i><i>/</i><i>6</i><i>/</i><i>2</i><i>8</i></div>
<div class="a" style="left:0px;top:93px;width:62px;height:23px;background:#FFFFFF;border-right:1px solid #ACA899;border-bottom:1px solid #ACA899"></div>
<div class="t m" style="left:2px;top:99px;color:#000"><i>5</i></div>
<div class="a" style="left:62px;top:93px;width:61px;height:23px;background:#FFFFFF;border-right:1px solid #ACA899;border-bottom:1px solid #ACA899"></div>
<div class="t m" style="left:63px;top:99px;color:#000"><i>−</i><i>1</i><i>8</i><i>.</i><i>6</i><i>4</i></div>
<div class="a" style="left:123px;top:93px;width:61px;height:23px;background:#FFFFFF;border-right:1px solid #ACA899;border-bottom:1px solid #ACA899"></div>
<div class="t m" style="left:124px;top:99px;color:#000"><i>8</i></div>
<div class="a" style="left:184px;top:93px;width:61px;height:23px;background:#FFFFFF;border-right:1px solid #ACA899;border-bottom:1px solid #ACA899"></div>
<div class="t m" style="left:185px;top:99px;color:#000"><i>1</i><i>4</i><i>:</i><i>2</i><i>3</i><i>:</i><i>1</i><i>9</i></div>
<div class="a" style="left:245px;top:93px;width:62px;height:23px;background:#FFFFFF;border-right:1px solid #ACA899;border-bottom:1px solid #ACA899"></div>
<div class="t m" style="left:246px;top:99px;color:#000"><i>2</i><i>0</i><i>1</i><i>4</i><i>/</i><i>6</i><i>/</i><i>2</i><i>8</i></div>
<div class="a" style="left:0px;top:116px;width:62px;height:23px;background:#FFFFFF;border-right:1px solid #ACA899;border-bottom:1px solid #ACA899"></div>
<div class="t m" style="left:2px;top:122px;color:#000"><i>6</i></div>
<div class="a" style="left:62px;top:116px;width:61px;height:23px;background:#FFFFFF;border-right:1px solid #ACA899;border-bottom:1px solid #ACA899"></div>
<div class="t m" style="left:63px;top:122px;color:#000"><i>−</i><i>9</i><i>0</i><i>.</i><i>2</i><i>2</i></div>
<div class="a" style="left:123px;top:116px;width:61px;height:23px;background:#FFFFFF;border-right:1px solid #ACA899;border-bottom:1px solid #ACA899"></div>
<div class="t m" style="left:124px;top:122px;color:#000"><i>−</i><i>1</i></div>
<div class="a" style="left:184px;top:116px;width:61px;height:23px;background:#FFFFFF;border-right:1px solid #ACA899;border-bottom:1px solid #ACA899"></div>
<div class="t m" style="left:185px;top:122px;color:#000"><i>1</i><i>4</i><i>:</i><i>2</i><i>3</i><i>:</i><i>2</i><i>6</i></div>
<div class="a" style="left:245px;top:116px;width:62px;height:23px;background:#FFFFFF;border-right:1px solid #ACA899;border-bottom:1px solid #ACA899"></div>
<div class="t m" style="left:246px;top:122px;color:#000"><i>2</i><i>0</i><i>1</i><i>4</i><i>/</i><i>6</i><i>/</i><i>2</i><i>8</i></div>
<div class="a" style="left:0px;top:139px;width:62px;height:23px;background:#FFFFFF;border-right:1px solid #ACA899;border-bottom:1px solid #ACA899"></div>
<div class="t m" style="left:2px;top:145px;color:#000"><i>7</i></div>
<div class="a" style="left:62px;top:139px;width:61px;height:23px;background:#FFFFFF;border-right:1px solid #ACA899;border-bottom:1px solid #ACA899"></div>
<div class="t m" style="left:63px;top:145px;color:#000"><i>3</i><i>3</i><i>.</i><i>3</i><i>6</i></div>
<div class="a" style="left:123px;top:139px;width:61px;height:23px;background:#FFFFFF;border-right:1px solid #ACA899;border-bottom:1px solid #ACA899"></div>
<div class="t m" style="left:124px;top:145px;color:#000"><i>−</i><i>1</i></div>
<div class="a" style="left:184px;top:139px;width:61px;height:23px;background:#FFFFFF;border-right:1px solid #ACA899;border-bottom:1px solid #ACA899"></div>
<div class="t m" style="left:185px;top:145px;color:#000"><i>1</i><i>4</i><i>:</i><i>2</i><i>3</i><i>:</i><i>5</i><i>5</i></div>
<div class="a" style="left:245px;top:139px;width:62px;height:23px;background:#FFFFFF;border-right:1px solid #ACA899;border-bottom:1px solid #ACA899"></div>
<div class="t m" style="left:246px;top:145px;color:#000"><i>2</i><i>0</i><i>1</i><i>4</i><i>/</i><i>6</i><i>/</i><i>2</i><i>8</i></div>
<div class="a" style="left:0px;top:162px;width:62px;height:23px;background:#FFFFFF;border-right:1px solid #ACA899;border-bottom:1px solid #ACA899"></div>
<div class="t m" style="left:2px;top:168px;color:#000"><i>8</i></div>
<div class="a" style="left:62px;top:162px;width:61px;height:23px;background:#FFFFFF;border-right:1px solid #ACA899;border-bottom:1px solid #ACA899"></div>
<div class="t m" style="left:63px;top:168px;color:#000"><i>−</i><i>3</i><i>2</i><i>.</i><i>9</i></div>
<div class="a" style="left:123px;top:162px;width:61px;height:23px;background:#FFFFFF;border-right:1px solid #ACA899;border-bottom:1px solid #ACA899"></div>
<div class="t m" style="left:124px;top:168px;color:#000"><i>−</i><i>2</i></div>
<div class="a" style="left:184px;top:162px;width:61px;height:23px;background:#FFFFFF;border-right:1px solid #ACA899;border-bottom:1px solid #ACA899"></div>
<div class="t m" style="left:185px;top:168px;color:#000"><i>1</i><i>4</i><i>:</i><i>2</i><i>6</i><i>:</i><i>4</i><i>7</i></div>
<div class="a" style="left:245px;top:162px;width:62px;height:23px;background:#FFFFFF;border-right:1px solid #ACA899;border-bottom:1px solid #ACA899"></div>
<div class="t m" style="left:246px;top:168px;color:#000"><i>2</i><i>0</i><i>1</i><i>4</i><i>/</i><i>6</i><i>/</i><i>2</i><i>8</i></div>
<div class="a" style="left:0px;top:185px;width:62px;height:23px;background:#FFFFFF;border-right:1px solid #ACA899;border-bottom:1px solid #ACA899"></div>
<div class="t m" style="left:2px;top:191px;color:#000"><i>9</i></div>
<div class="a" style="left:62px;top:185px;width:61px;height:23px;background:#FFFFFF;border-right:1px solid #ACA899;border-bottom:1px solid #ACA899"></div>
<div class="t m" style="left:63px;top:191px;color:#000"><i>−</i><i>9</i><i>7</i><i>.</i><i>9</i><i>8</i></div>
<div class="a" style="left:123px;top:185px;width:61px;height:23px;background:#FFFFFF;border-right:1px solid #ACA899;border-bottom:1px solid #ACA899"></div>
<div class="t m" style="left:124px;top:191px;color:#000"><i>2</i></div>
<div class="a" style="left:184px;top:185px;width:61px;height:23px;background:#FFFFFF;border-right:1px solid #ACA899;border-bottom:1px solid #ACA899"></div>
<div class="t m" style="left:185px;top:191px;color:#000"><i>1</i><i>4</i><i>:</i><i>2</i><i>6</i><i>:</i><i>5</i><i>5</i></div>
<div class="a" style="left:245px;top:185px;width:62px;height:23px;background:#FFFFFF;border-right:1px solid #ACA899;border-bottom:1px solid #ACA899"></div>
<div class="t m" style="left:246px;top:191px;color:#000"><i>2</i><i>0</i><i>1</i><i>4</i><i>/</i><i>6</i><i>/</i><i>2</i><i>8</i></div>
<div class="a" style="left:0px;top:208px;width:62px;height:23px;background:#FFFFFF;border-right:1px solid #ACA899;border-bottom:1px solid #ACA899"></div>
<div class="t m" style="left:2px;top:214px;color:#000"><i>1</i><i>0</i></div>
<div class="a" style="left:62px;top:208px;width:61px;height:23px;background:#FFFFFF;border-right:1px solid #ACA899;border-bottom:1px solid #ACA899"></div>
<div class="t m" style="left:63px;top:214px;color:#000"><i>−</i><i>3</i><i>9</i><i>.</i><i>1</i><i>5</i></div>
<div class="a" style="left:123px;top:208px;width:61px;height:23px;background:#FFFFFF;border-right:1px solid #ACA899;border-bottom:1px solid #ACA899"></div>
<div class="t m" style="left:124px;top:214px;color:#000"><i>0</i></div>
<div class="a" style="left:184px;top:208px;width:61px;height:23px;background:#FFFFFF;border-right:1px solid #ACA899;border-bottom:1px solid #ACA899"></div>
<div class="t m" style="left:185px;top:214px;color:#000"><i>1</i><i>4</i><i>:</i><i>2</i><i>7</i><i>:</i><i>0</i><i>0</i></div>
<div class="a" style="left:245px;top:208px;width:62px;height:23px;background:#FFFFFF;border-right:1px solid #ACA899;border-bottom:1px solid #ACA899"></div>
<div class="t m" style="left:246px;top:214px;color:#000"><i>2</i><i>0</i><i>1</i><i>4</i><i>/</i><i>6</i><i>/</i><i>2</i><i>8</i></div>
<div class="a" style="left:0px;top:231px;width:62px;height:23px;background:#FFFFFF;border-right:1px solid #ACA899;border-bottom:1px solid #ACA899"></div>
<div class="t m" style="left:2px;top:237px;color:#000"><i>1</i><i>1</i></div>
<div class="a" style="left:62px;top:231px;width:61px;height:23px;background:#FFFFFF;border-right:1px solid #ACA899;border-bottom:1px solid #ACA899"></div>
<div class="t m" style="left:63px;top:237px;color:#000"><i>9</i><i>.</i><i>4</i><i>5</i></div>
<div class="a" style="left:123px;top:231px;width:61px;height:23px;background:#FFFFFF;border-right:1px solid #ACA899;border-bottom:1px solid #ACA899"></div>
<div class="t m" style="left:124px;top:237px;color:#000"><i>3</i></div>
<div class="a" style="left:184px;top:231px;width:61px;height:23px;background:#FFFFFF;border-right:1px solid #ACA899;border-bottom:1px solid #ACA899"></div>
<div class="t m" style="left:185px;top:237px;color:#000"><i>1</i><i>4</i><i>:</i><i>2</i><i>7</i><i>:</i><i>0</i><i>3</i></div>
<div class="a" style="left:245px;top:231px;width:62px;height:23px;background:#FFFFFF;border-right:1px solid #ACA899;border-bottom:1px solid #ACA899"></div>
<div class="t m" style="left:246px;top:237px;color:#000"><i>2</i><i>0</i><i>1</i><i>4</i><i>/</i><i>6</i><i>/</i><i>2</i><i>8</i></div>
<div class="a" style="left:0px;top:254px;width:62px;height:23px;background:#FFFFFF;border-right:1px solid #ACA899;border-bottom:1px solid #ACA899"></div>
<div class="t m" style="left:2px;top:260px;color:#000"><i>1</i><i>2</i></div>
<div class="a" style="left:62px;top:254px;width:61px;height:23px;background:#FFFFFF;border-right:1px solid #ACA899;border-bottom:1px solid #ACA899"></div>
<div class="t m" style="left:63px;top:260px;color:#000"><i>2</i><i>7</i><i>.</i><i>7</i><i>1</i></div>
<div class="a" style="left:123px;top:254px;width:61px;height:23px;background:#FFFFFF;border-right:1px solid #ACA899;border-bottom:1px solid #ACA899"></div>
<div class="t m" style="left:124px;top:260px;color:#000"><i>−</i><i>1</i></div>
<div class="a" style="left:184px;top:254px;width:61px;height:23px;background:#FFFFFF;border-right:1px solid #ACA899;border-bottom:1px solid #ACA899"></div>
<div class="t m" style="left:185px;top:260px;color:#000"><i>1</i><i>4</i><i>:</i><i>2</i><i>7</i><i>:</i><i>0</i><i>6</i></div>
<div class="a" style="left:245px;top:254px;width:62px;height:23px;background:#FFFFFF;border-right:1px solid #ACA899;border-bottom:1px solid #ACA899"></div>
<div class="t m" style="left:246px;top:260px;color:#000"><i>2</i><i>0</i><i>1</i><i>4</i><i>/</i><i>6</i><i>/</i><i>2</i><i>8</i></div>
<div class="a" style="left:0px;top:277px;width:62px;height:23px;background:#FFFFFF;border-right:1px solid #ACA899;border-bottom:1px solid #ACA899"></div>
<div class="t m" style="left:2px;top:283px;color:#000"><i>1</i><i>3</i></div>
<div class="a" style="left:62px;top:277px;width:61px;height:23px;background:#FFFFFF;border-right:1px solid #ACA899;border-bottom:1px solid #ACA899"></div>
<div class="t m" style="left:63px;top:283px;color:#000"><i>3</i><i>4</i><i>.</i><i>0</i><i>5</i></div>
<div class="a" style="left:123px;top:277px;width:61px;height:23px;background:#FFFFFF;border-right:1px solid #ACA899;border-bottom:1px solid #ACA899"></div>
<div class="t m" style="left:124px;top:283px;color:#000"><i>2</i></div>
<div class="a" style="left:184px;top:277px;width:61px;height:23px;background:#FFFFFF;border-right:1px solid #ACA899;border-bottom:1px solid #ACA899"></div>
<div class="t m" style="left:185px;top:283px;color:#000"><i>1</i><i>4</i><i>:</i><i>2</i><i>7</i><i>:</i><i>1</i><i>0</i></div>
<div class="a" style="left:245px;top:277px;width:62px;height:23px;background:#FFFFFF;border-right:1px solid #ACA899;border-bottom:1px solid #ACA899"></div>
<div class="t m" style="left:246px;top:283px;color:#000"><i>2</i><i>0</i><i>1</i><i>4</i><i>/</i><i>6</i><i>/</i><i>2</i><i>8</i></div>
<div class="a" style="left:0px;top:300px;width:62px;height:23px;background:#FFFFFF;border-right:1px solid #ACA899;border-bottom:1px solid #ACA899"></div>
<div class="t m" style="left:2px;top:306px;color:#000"><i>1</i><i>4</i></div>
<div class="a" style="left:62px;top:300px;width:61px;height:23px;background:#FFFFFF;border-right:1px solid #ACA899;border-bottom:1px solid #ACA899"></div>
<div class="t m" style="left:63px;top:306px;color:#000"><i>−</i><i>3</i><i>6</i><i>.</i><i>2</i><i>4</i></div>
<div class="a" style="left:123px;top:300px;width:61px;height:23px;background:#FFFFFF;border-right:1px solid #ACA899;border-bottom:1px solid #ACA899"></div>
<div class="t m" style="left:124px;top:306px;color:#000"><i>0</i></div>
<div class="a" style="left:184px;top:300px;width:61px;height:23px;background:#FFFFFF;border-right:1px solid #ACA899;border-bottom:1px solid #ACA899"></div>
<div class="t m" style="left:185px;top:306px;color:#000"><i>1</i><i>4</i><i>:</i><i>2</i><i>7</i><i>:</i><i>1</i><i>4</i></div>
<div class="a" style="left:245px;top:300px;width:62px;height:23px;background:#FFFFFF;border-right:1px solid #ACA899;border-bottom:1px solid #ACA899"></div>
<div class="t m" style="left:246px;top:306px;color:#000"><i>2</i><i>0</i><i>1</i><i>4</i><i>/</i><i>6</i><i>/</i><i>2</i><i>8</i></div>
<div class="a" style="left:0px;top:323px;width:62px;height:23px;background:#FFFFFF;border-right:1px solid #ACA899;border-bottom:1px solid #ACA899"></div>
<div class="t m" style="left:2px;top:329px;color:#000"><i>1</i><i>5</i></div>
<div class="a" style="left:62px;top:323px;width:61px;height:23px;background:#FFFFFF;border-right:1px solid #ACA899;border-bottom:1px solid #ACA899"></div>
<div class="t m" style="left:63px;top:329px;color:#000"><i>9</i><i>.</i><i>9</i><i>5</i></div>
<div class="a" style="left:123px;top:323px;width:61px;height:23px;background:#FFFFFF;border-right:1px solid #ACA899;border-bottom:1px solid #ACA899"></div>
<div class="t m" style="left:124px;top:329px;color:#000"><i>3</i></div>
<div class="a" style="left:184px;top:323px;width:61px;height:23px;background:#FFFFFF;border-right:1px solid #ACA899;border-bottom:1px solid #ACA899"></div>
<div class="t m" style="left:185px;top:329px;color:#000"><i>1</i><i>4</i><i>:</i><i>2</i><i>2</i><i>:</i><i>4</i><i>1</i></div>
<div class="a" style="left:245px;top:323px;width:62px;height:23px;background:#FFFFFF;border-right:1px solid #ACA899;border-bottom:1px solid #ACA899"></div>
<div class="t m" style="left:246px;top:329px;color:#000"><i>2</i><i>0</i><i>1</i><i>4</i><i>/</i><i>6</i><i>/</i><i>2</i><i>8</i></div>
<div class="a" style="left:0px;top:346px;width:62px;height:23px;background:#FFFFFF;border-right:1px solid #ACA899;border-bottom:1px solid #ACA899"></div>
<div class="t m" style="left:2px;top:352px;color:#000"><i>1</i><i>6</i></div>
<div class="a" style="left:62px;top:346px;width:61px;height:23px;background:#FFFFFF;border-right:1px solid #ACA899;border-bottom:1px solid #ACA899"></div>
<div class="t m" style="left:63px;top:352px;color:#000"><i>9</i><i>.</i><i>7</i><i>6</i></div>
<div class="a" style="left:123px;top:346px;width:61px;height:23px;background:#FFFFFF;border-right:1px solid #ACA899;border-bottom:1px solid #ACA899"></div>
<div class="t m" style="left:124px;top:352px;color:#000"><i>−</i><i>1</i></div>
<div class="a" style="left:184px;top:346px;width:61px;height:23px;background:#FFFFFF;border-right:1px solid #ACA899;border-bottom:1px solid #ACA899"></div>
<div class="t m" style="left:185px;top:352px;color:#000"><i>1</i><i>4</i><i>:</i><i>2</i><i>2</i><i>:</i><i>5</i><i>8</i></div>
<div class="a" style="left:245px;top:346px;width:62px;height:23px;background:#FFFFFF;border-right:1px solid #ACA899;border-bottom:1px solid #ACA899"></div>
<div class="t m" style="left:246px;top:352px;color:#000"><i>2</i><i>0</i><i>1</i><i>4</i><i>/</i><i>6</i><i>/</i><i>2</i><i>8</i></div>
<div class="a" style="left:0px;top:369px;width:62px;height:23px;background:#FFFFFF;border-right:1px solid #ACA899;border-bottom:1px solid #ACA899"></div>
<div class="t m" style="left:2px;top:375px;color:#000"><i>1</i><i>7</i></div>
<div class="a" style="left:62px;top:369px;width:61px;height:23px;background:#FFFFFF;border-right:1px solid #ACA899;border-bottom:1px solid #ACA899"></div>
<div class="t m" style="left:63px;top:375px;color:#000"><i>7</i><i>2</i><i>.</i><i>7</i><i>7</i></div>
<div class="a" style="left:123px;top:369px;width:61px;height:23px;background:#FFFFFF;border-right:1px solid #ACA899;border-bottom:1px solid #ACA899"></div>
<div class="t m" style="left:124px;top:375px;color:#000"><i>−</i><i>7</i></div>
<div class="a" style="left:184px;top:369px;width:61px;height:23px;background:#FFFFFF;border-right:1px solid #ACA899;border-bottom:1px solid #ACA899"></div>
<div class="t m" style="left:185px;top:375px;color:#000"><i>1</i><i>4</i><i>:</i><i>2</i><i>3</i><i>:</i><i>0</i><i>4</i></div>
<div class="a" style="left:245px;top:369px;width:62px;height:23px;background:#FFFFFF;border-right:1px solid #ACA899;border-bottom:1px solid #ACA899"></div>
<div class="t m" style="left:246px;top:375px;color:#000"><i>2</i><i>0</i><i>1</i><i>4</i><i>/</i><i>6</i><i>/</i><i>2</i><i>8</i></div>
</div>
<div class="a" style="left:982px;top:115px;width:17px;height:404px;background:#F7F7F3;border-left:1px solid #EEEDE5"></div>
<div class="a" style="left:983px;top:116px;width:15px;height:16px;border:1px solid #FFFFFF;border-radius:2px;background:linear-gradient(135deg,#DCE8FE,#B8CFF8 60%,#A5BEF0)"></div>
<svg class="a" style="left:982px;top:116px" width="17" height="16"><path d="M4.5,10 L8.5,6 L12.5,10" stroke="#4D6185" stroke-width="2" fill="none"/></svg>
<div class="a" style="left:983px;top:503px;width:15px;height:16px;border:1px solid #FFFFFF;border-radius:2px;background:linear-gradient(135deg,#DCE8FE,#B8CFF8 60%,#A5BEF0)"></div>
<svg class="a" style="left:982px;top:503px" width="17" height="16"><path d="M4.5,6 L8.5,10 L12.5,6" stroke="#4D6185" stroke-width="2" fill="none"/></svg>
<div class="a" style="left:983px;top:132px;width:15px;height:308px;border:1px solid #FFFFFF;border-radius:2px;background:linear-gradient(90deg,#C6D7FB,#BCCFF8 40%,#B4C8F6 80%,#A9BEF0)"></div>
<div class="a" style="left:986px;top:282px;width:8px;height:1px;background:#EEF3FE"></div>
<div class="a" style="left:986px;top:284px;width:8px;height:1px;background:#EEF3FE"></div>
<div class="a" style="left:986px;top:286px;width:8px;height:1px;background:#EEF3FE"></div>
<div class="a" style="left:986px;top:288px;width:8px;height:1px;background:#EEF3FE"></div>
<div class="t" style="left:676px;top:531px;">跨距：</div>
<div class="a" style="left:724px;top:526px;width:74px;height:21px;border:1px solid #7F9DB9;background:#fff"></div>
<div class="t m" style="left:726px;top:530px;"><i>1</i><i>0</i><i>0</i></div>
<div class="t" style="left:806px;top:535px;font-family:'Liberation Mono', monospace;font-size:10px;letter-spacing:-0.3px;-webkit-text-stroke:0">mm</div>
<div class="t" style="left:866px;top:532px;">分段数：</div>
<div class="a" style="left:923px;top:526px;width:76px;height:21px;border:1px solid #A5B4C4;background:#EBE9DC"></div>
<div class="t m" style="left:926px;top:530px;"><i>4</i></div>
<div class="a" style="left:926px;top:560px;width:72px;height:23px;border:1px solid #003C74;border-radius:3px;background:linear-gradient(#FFFFFF,#F4F4F0 50%,#ECEBE6 80%,#D8D4CC)"></div>
<div class="t" style="left:926px;top:565px;width:72px;text-align:center">计算误差</div></body></html>
